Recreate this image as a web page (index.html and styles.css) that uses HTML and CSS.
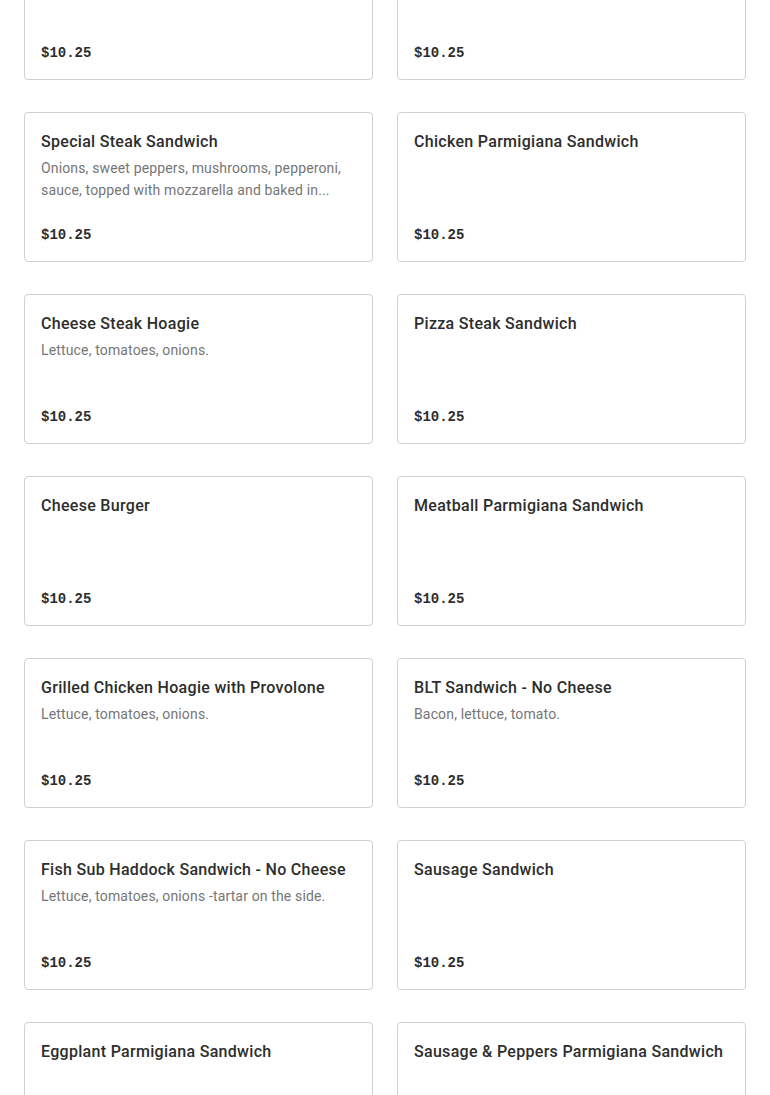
FILE: index.html
```html
<!DOCTYPE html>
<html>
<head>
<meta charset="utf-8">
<link rel="stylesheet" href="styles.css">
</head>
<body>
<div class="grid">
  <div class="card"><div class="title">Steak Sandwich</div><div class="price">$10.25</div></div>
  <div class="card"><div class="title">Chicken Steak Sandwich</div><div class="price">$10.25</div></div>

  <div class="card"><div class="title">Special Steak Sandwich</div><div class="desc">Onions, sweet peppers, mushrooms, pepperoni, sauce, topped with mozzarella and baked in...</div><div class="price">$10.25</div></div>
  <div class="card"><div class="title">Chicken Parmigiana Sandwich</div><div class="price">$10.25</div></div>

  <div class="card"><div class="title">Cheese Steak Hoagie</div><div class="desc">Lettuce, tomatoes, onions.</div><div class="price">$10.25</div></div>
  <div class="card"><div class="title">Pizza Steak Sandwich</div><div class="price">$10.25</div></div>

  <div class="card"><div class="title">Cheese Burger</div><div class="price">$10.25</div></div>
  <div class="card"><div class="title">Meatball Parmigiana Sandwich</div><div class="price">$10.25</div></div>

  <div class="card"><div class="title">Grilled Chicken Hoagie with Provolone</div><div class="desc">Lettuce, tomatoes, onions.</div><div class="price">$10.25</div></div>
  <div class="card"><div class="title">BLT Sandwich - No Cheese</div><div class="desc">Bacon, lettuce, tomato.</div><div class="price">$10.25</div></div>

  <div class="card"><div class="title">Fish Sub Haddock Sandwich - No Cheese</div><div class="desc">Lettuce, tomatoes, onions -tartar on the side.</div><div class="price">$10.25</div></div>
  <div class="card"><div class="title">Sausage Sandwich</div><div class="price">$10.25</div></div>

  <div class="card"><div class="title">Eggplant Parmigiana Sandwich</div><div class="price">$10.25</div></div>
  <div class="card"><div class="title">Sausage &amp; Peppers Parmigiana Sandwich</div><div class="price">$10.25</div></div>
</div>
</body>
</html>
```

FILE: styles.css
```css
html, body {
  margin: 0;
  padding: 0;
  background: #ffffff;
}
body {
  font-family: Roboto, "Noto Sans", sans-serif;
  color: #2d2d2d;
  overflow: hidden;
}
.grid {
  display: grid;
  grid-template-columns: 349px 349px;
  column-gap: 24px;
  row-gap: 32px;
  padding: 0 24px;
  margin-top: -70px;
}
.card {
  box-sizing: border-box;
  height: 150px;
  border: 1px solid #d0d0d0;
  border-radius: 4px;
  padding: 17px 16px 15px;
  display: flex;
  flex-direction: column;
  background: #fff;
}
.title {
  font-size: 16px;
  font-weight: 500;
  line-height: 24px;
  letter-spacing: 0.3px;
  color: #2d2d2d;
  white-space: nowrap;
}
.desc {
  margin-top: 3px;
  font-size: 14px;
  line-height: 22px;
  letter-spacing: 0.15px;
  color: #767676;
  display: -webkit-box;
  -webkit-line-clamp: 2;
  -webkit-box-orient: vertical;
  overflow: hidden;
}
.price {
  margin-top: auto;
  font-family: "Liberation Mono", "DejaVu Sans Mono", monospace;
  font-weight: 700;
  font-size: 14px;
  line-height: 21px;
  color: #2d2d2d;
}
```
